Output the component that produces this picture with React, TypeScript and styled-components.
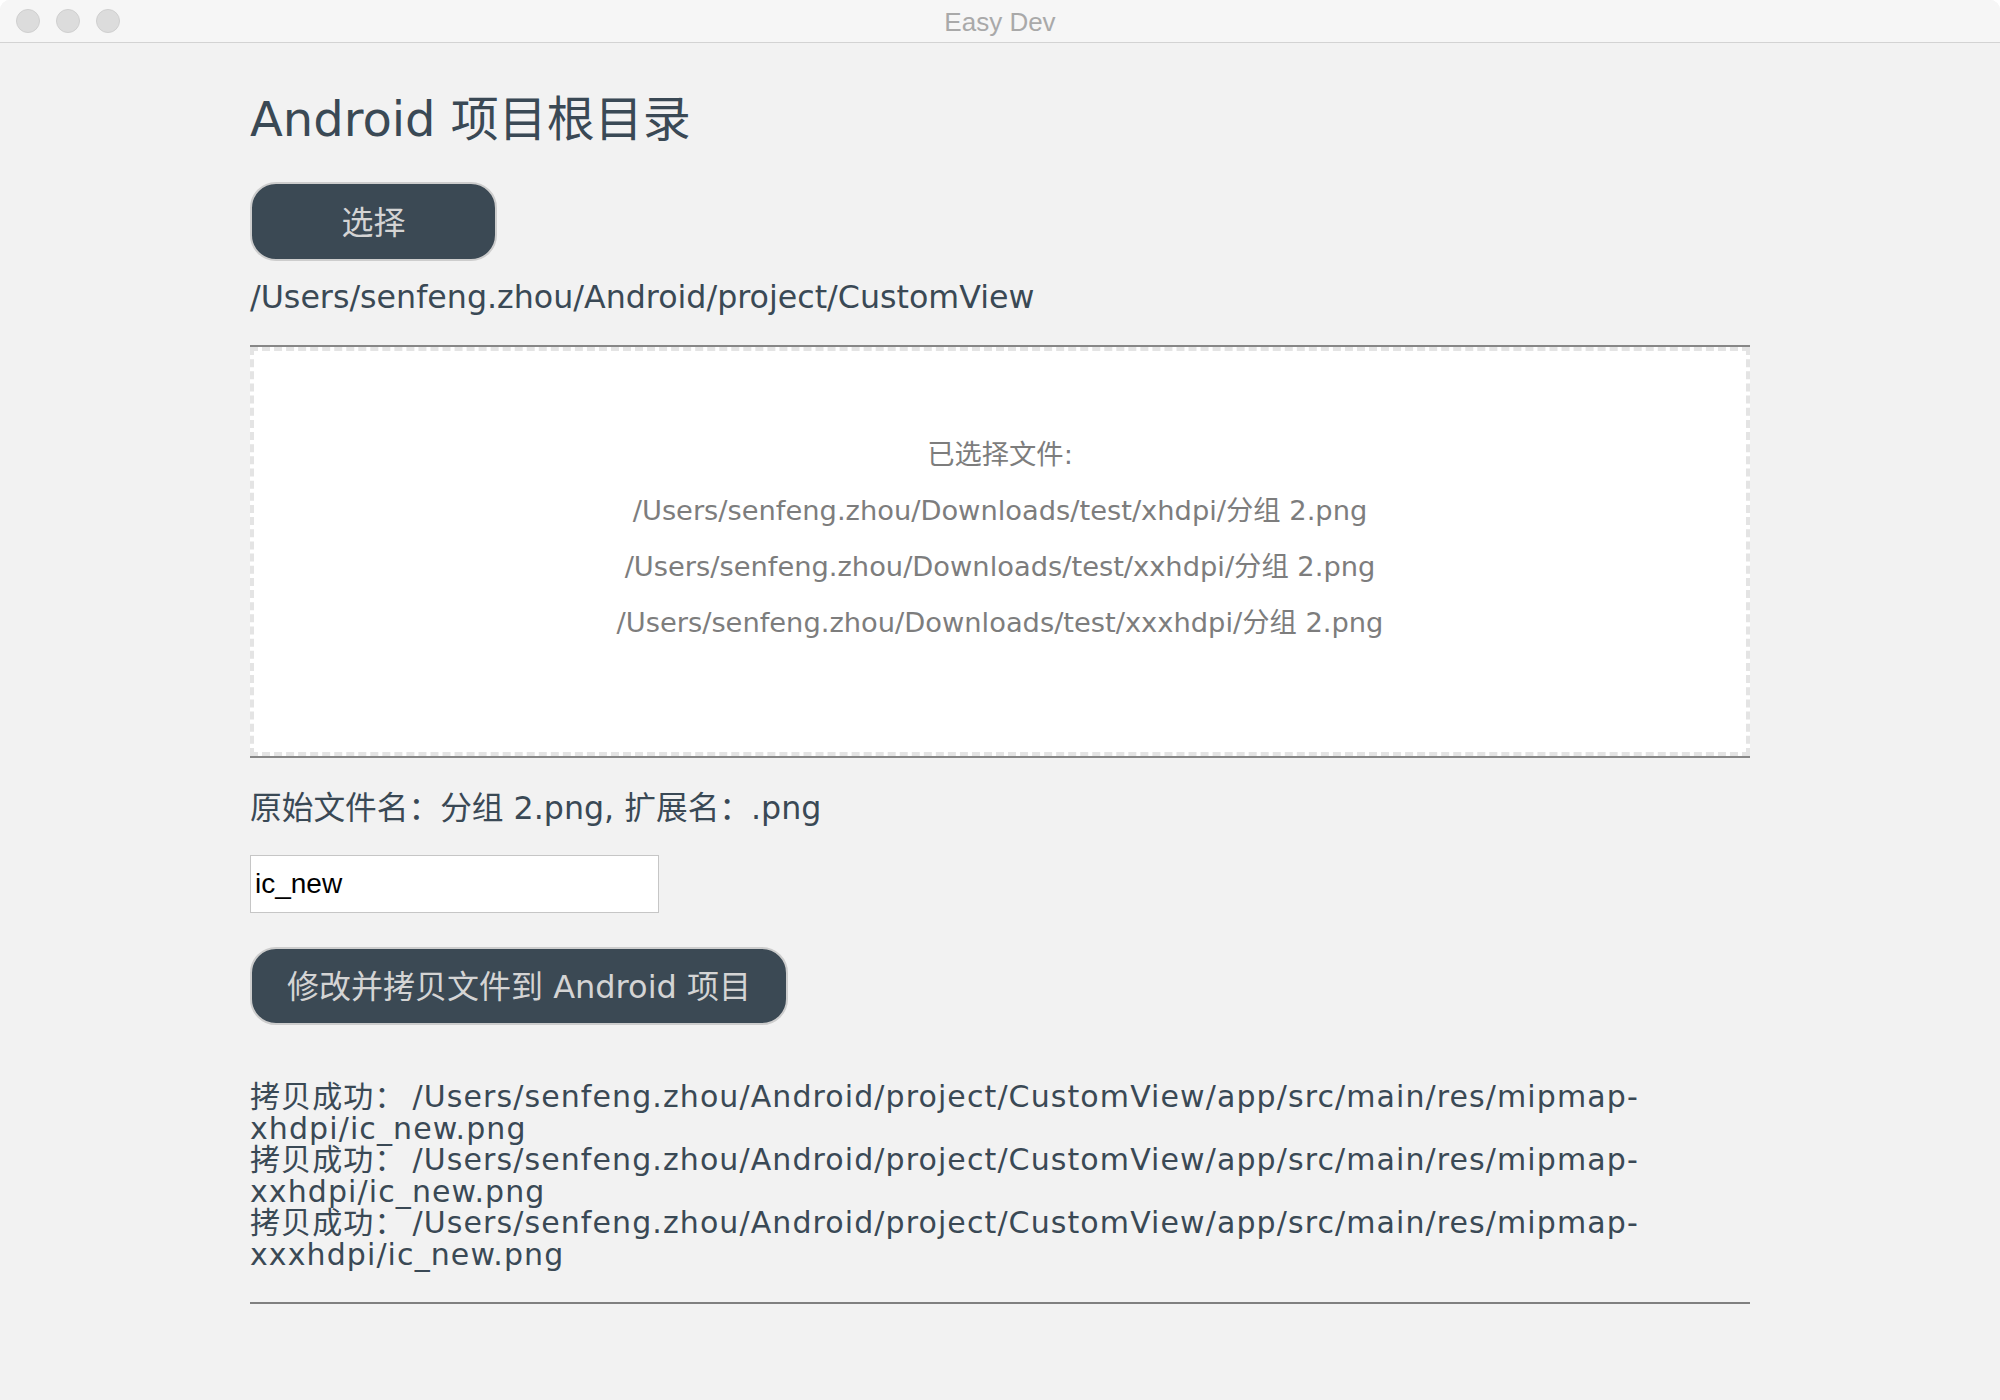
import React from "react";
import styled, { createGlobalStyle } from "styled-components";

const FONT = `"DejaVu Sans", "Noto Sans CJK SC", sans-serif`;
const INK = "#3a4955";

const GlobalStyle = createGlobalStyle`
  html, body { margin: 0; padding: 0; background: #ffffff; }
  * { box-sizing: border-box; }
`;

const Window = styled.div`
  width: 2000px;
  height: 1400px;
  background: #f2f2f2;
  border-radius: 10px 10px 0 0;
  overflow: hidden;
  display: flex;
  flex-direction: column;
  font-family: ${FONT};
  color: ${INK};
`;

const TitleBar = styled.header`
  flex: none;
  height: 43px;
  padding: 0 16px;
  display: grid;
  grid-template-columns: 1fr auto 1fr;
  align-items: center;
  background: #f6f6f6;
  border-bottom: 1px solid #d3d3d3;
`;

const TrafficLights = styled.div`
  display: flex;
  gap: 16px;
`;

const Light = styled.span`
  width: 24px;
  height: 24px;
  border-radius: 50%;
  background: #dcdcdc;
  border: 1px solid #cfcfcf;
`;

const WindowTitle = styled.div`
  font-family: "Liberation Sans", "Noto Sans", sans-serif;
  font-size: 26px;
  color: #a9a9a9;
  line-height: 30px;
  padding-top: 2px;
`;

const Content = styled.main`
  flex: 1;
  display: flex;
  flex-direction: column;
  align-items: flex-start;
  padding: 0 250px;
`;

const Heading = styled.h1`
  margin: 46px 0 0;
  font-size: 48px;
  font-weight: 400;
  line-height: 60px;
  white-space: nowrap;
`;

const ActionButton = styled.button<{ $width: number; $height: number; $spaceAbove: number }>`
  margin-top: ${(p) => p.$spaceAbove}px;
  width: ${(p) => p.$width}px;
  height: ${(p) => p.$height}px;
  border-radius: 26px;
  background: #3b4954;
  border: 2px solid #cdcdcd;
  color: #d4d4d4;
  font-family: ${FONT};
  font-size: 32px;
  line-height: 1;
  padding: 2px 0 0;
  display: flex;
  align-items: center;
  justify-content: center;
  cursor: pointer;
`;

const PathText = styled.p`
  margin: 18px 0 0;
  font-size: 31.7px;
  line-height: 36px;
  white-space: nowrap;
`;

const DropSection = styled.section`
  align-self: stretch;
  margin-top: 30px;
  border-top: 2px solid #878787;
  border-bottom: 2px solid #878787;
`;

const DropZone = styled.div`
  height: 409px;
  border: 4px dashed #e4e4e4;
  background: #ffffff;
  padding-top: 76px;
  text-align: center;
  color: #7d7d7d;
  font-size: 27.3px;
  line-height: 56px;
`;

const DropLine = styled.div`
  white-space: nowrap;
`;

const InfoText = styled.p`
  margin: 30px 0 0;
  font-size: 31.7px;
  line-height: 40px;
  white-space: nowrap;
`;

const NameInput = styled.input`
  margin-top: 27px;
  width: 409px;
  height: 58px;
  border: 1px solid #c6c6c6;
  background: #ffffff;
  padding: 0 4px;
  font-family: "Liberation Sans", Arial, sans-serif;
  font-size: 28px;
  color: #000000;
  outline: none;
`;

const ResultList = styled.div`
  margin-top: 56px;
  font-size: 30px;
  letter-spacing: 1.1px;
  line-height: 31.5px;
`;

const ResultLine = styled.div`
  white-space: nowrap;
`;

const ResultLabel = styled.span`
  padding-right: 7px;
`;

const Divider = styled.div`
  align-self: stretch;
  margin-top: 32px;
  height: 2px;
  background: #808080;
`;

const selectedFiles = [
  "/Users/senfeng.zhou/Downloads/test/xhdpi/分组 2.png",
  "/Users/senfeng.zhou/Downloads/test/xxhdpi/分组 2.png",
  "/Users/senfeng.zhou/Downloads/test/xxxhdpi/分组 2.png",
];

const densities = ["xhdpi", "xxhdpi", "xxxhdpi"];
const projectRoot = "/Users/senfeng.zhou/Android/project/CustomView";

export default function App() {
  return (
    <>
      <GlobalStyle />
      <Window>
        <TitleBar>
          <TrafficLights>
            <Light />
            <Light />
            <Light />
          </TrafficLights>
          <WindowTitle>Easy Dev</WindowTitle>
          <span />
        </TitleBar>
        <Content>
          <Heading>Android 项目根目录</Heading>
          <ActionButton $width={247} $height={79} $spaceAbove={33}>
            选择
          </ActionButton>
          <PathText>{projectRoot}</PathText>
          <DropSection>
            <DropZone>
              <DropLine>已选择文件:</DropLine>
              {selectedFiles.map((f) => (
                <DropLine key={f}>{f}</DropLine>
              ))}
            </DropZone>
          </DropSection>
          <InfoText>原始文件名：分组 2.png, 扩展名：.png</InfoText>
          <NameInput defaultValue="ic_new" />
          <ActionButton $width={538} $height={78} $spaceAbove={34}>
            修改并拷贝文件到 Android 项目
          </ActionButton>
          <ResultList>
            {densities.map((d) => (
              <React.Fragment key={d}>
                <ResultLine>
                  <ResultLabel>拷贝成功：</ResultLabel>
                  {projectRoot}/app/src/main/res/mipmap-
                </ResultLine>
                <ResultLine>{d}/ic_new.png</ResultLine>
              </React.Fragment>
            ))}
          </ResultList>
          <Divider />
        </Content>
      </Window>
    </>
  );
}
